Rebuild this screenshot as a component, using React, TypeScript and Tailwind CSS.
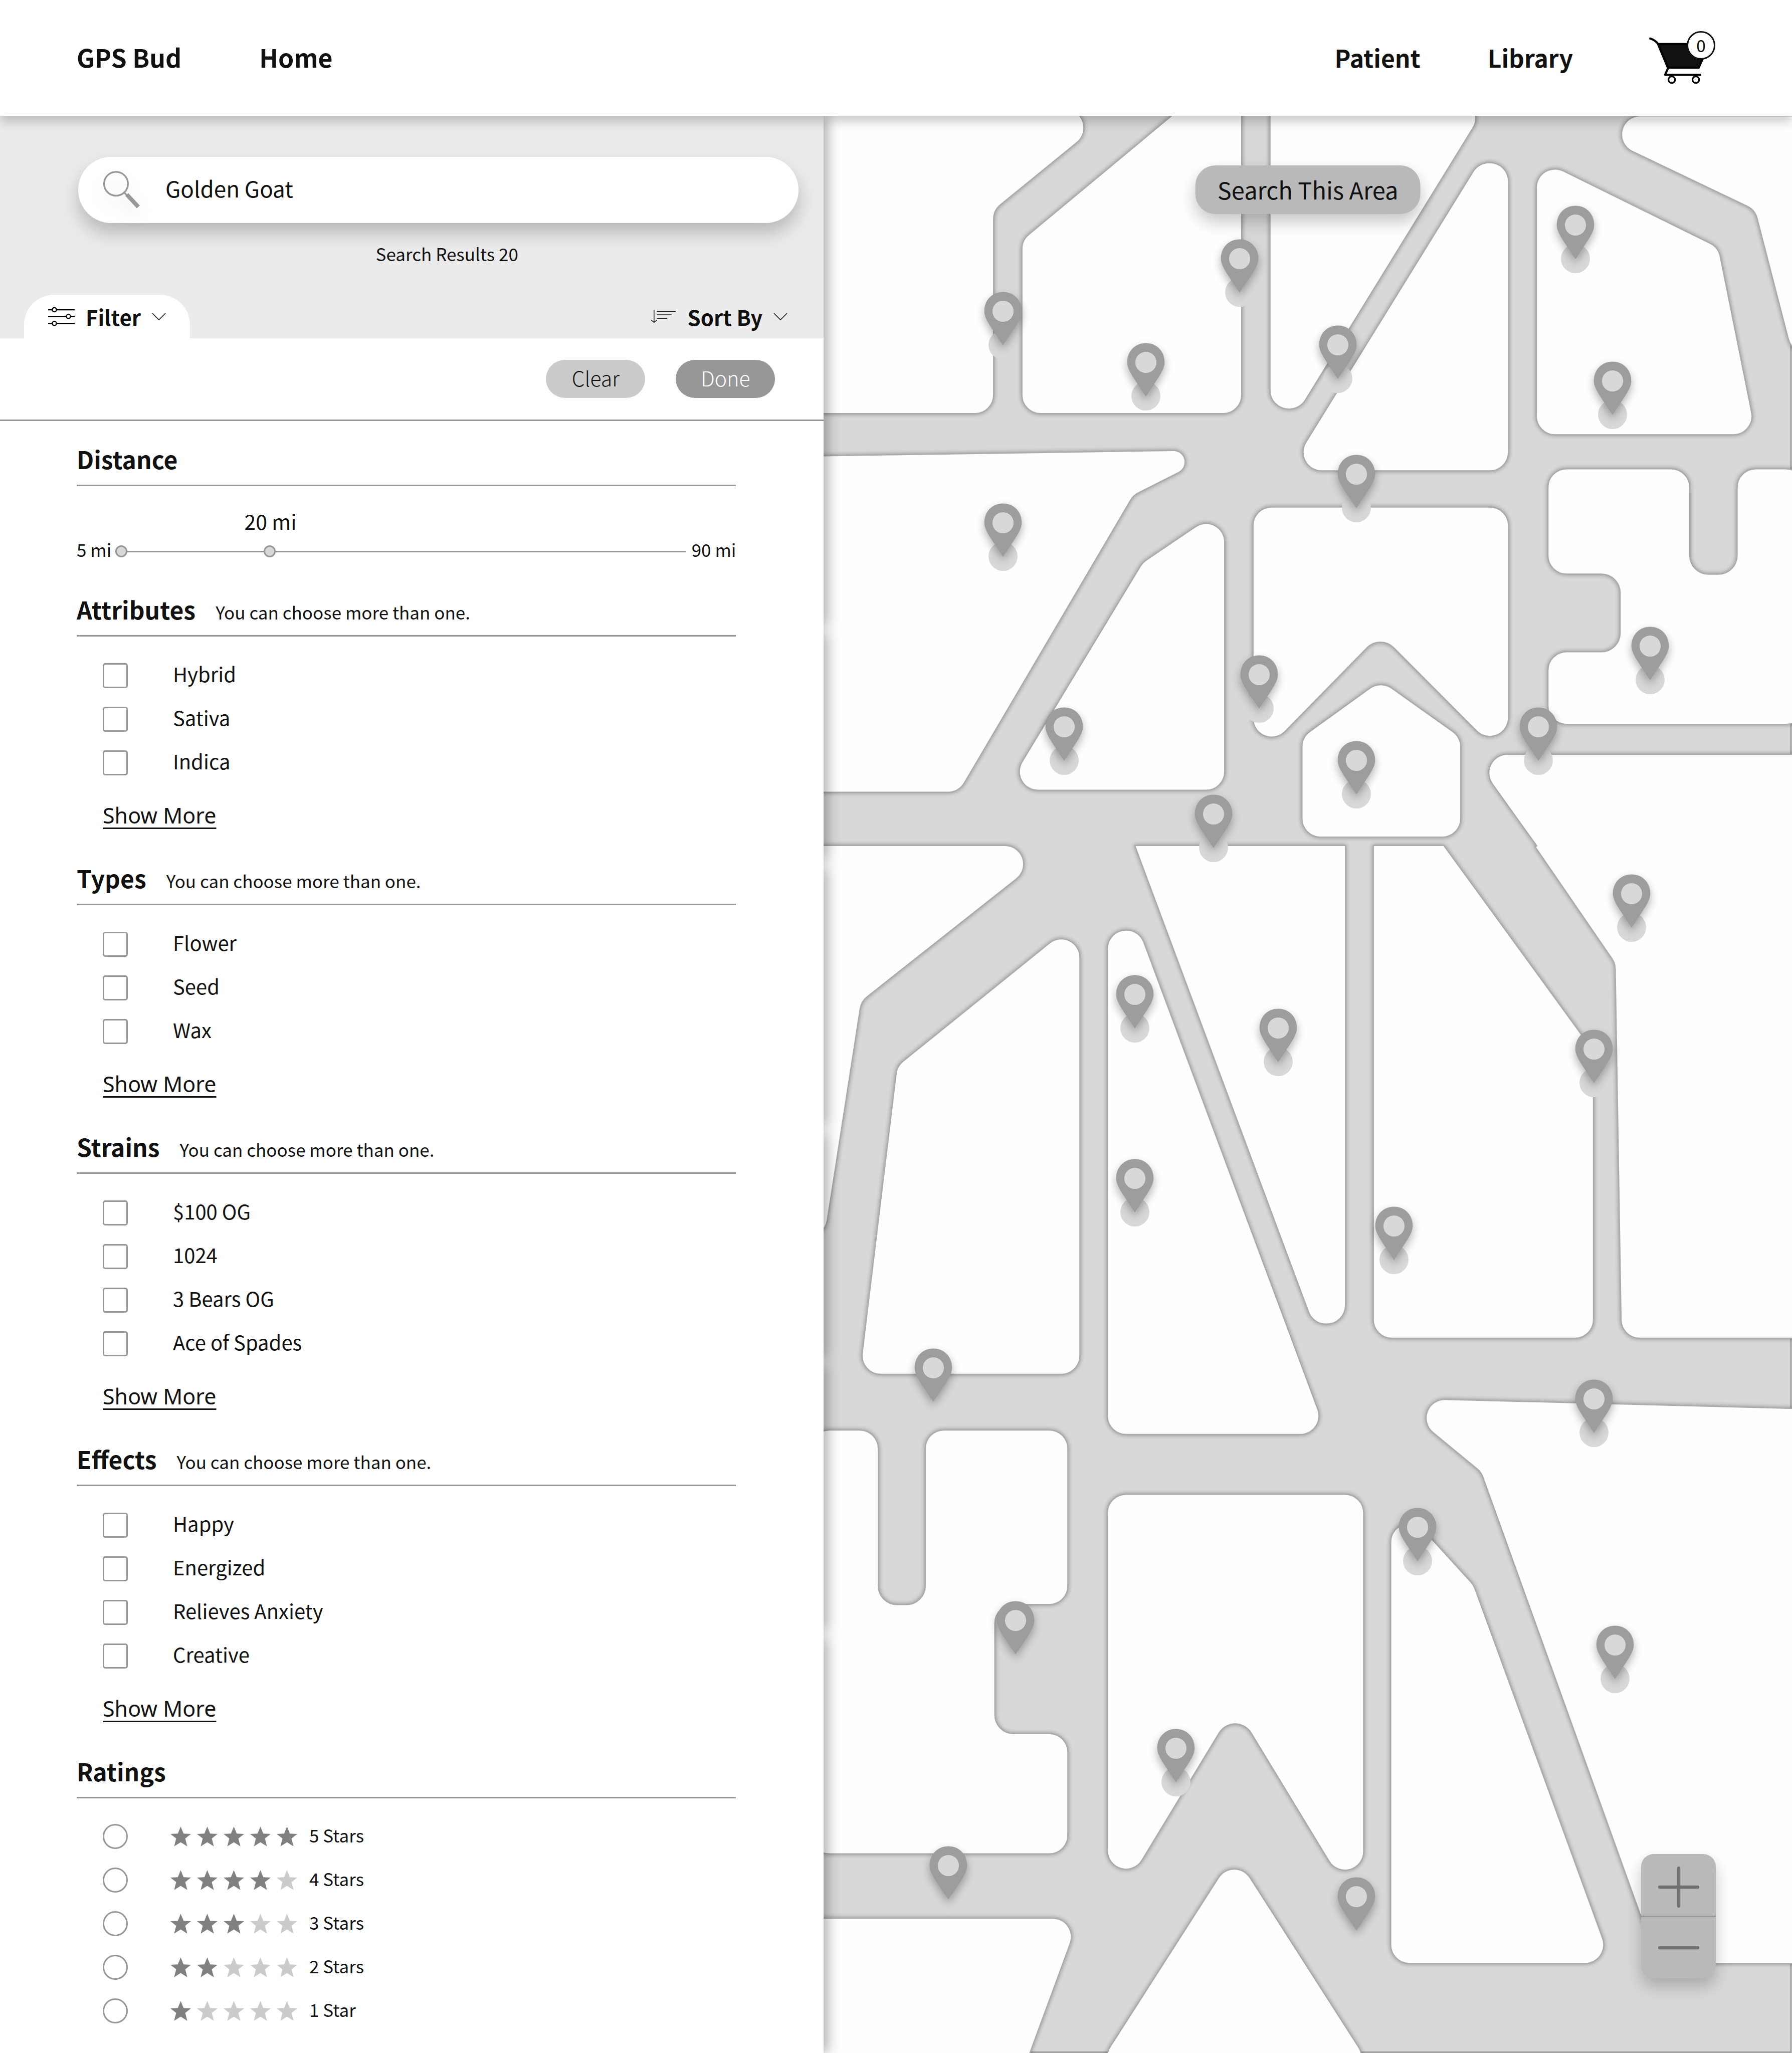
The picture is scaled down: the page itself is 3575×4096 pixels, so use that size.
import { useState } from "react";

type Point = [x: number, y: number, radius?: number];

const MAP = { x: 1986, y: 280, width: 2334, height: 4670 };
const CORNER = 45;

const BLOCKS: Point[][] = [
  [[1900, 264], [2695, 264], [2396, 508], [2396, 998], [1900, 998]],
  [[2921, 200], [2994, 200], [2994, 998], [2464, 998], [2464, 580]],
  [[3062, 240], [3594, 240], [3134, 987], [3062, 987]],
  [[3565, 393], [3637, 393], [3637, 1136], [3106, 1136]],
  [[3704, 381], [4143, 597], [4234, 1049], [3704, 1049]],
  [[3756, 280], [4400, 280], [4400, 1160], [4231, 507]],
  [[1900, 1101], [2951, 1085, 28], [2733, 1195], [2312, 1911], [1900, 1911]],
  [[2953, 1223], [2953, 1906], [2423, 1906], [2755, 1357]],
  [[3021, 1223], [3637, 1223], [3637, 1840], [3328, 1530], [3021, 1843]],
  [[3139, 1778], [3329, 1641], [3522, 1778], [3522, 2019], [3139, 2019]],
  [[3732, 1131], [4074, 1131], [4074, 1385], [4188, 1385], [4188, 1131], [4351, 1131], [4351, 1747], [3732, 1747], [3732, 1572], [3906, 1572], [3906, 1385], [3732, 1385]],
  [[1900, 2039], [2553, 2039], [2077, 2415], [1989, 2981], [1900, 2981]],
  [[2604, 2215], [2604, 3314], [2073, 3314], [2163, 2571]],
  [[2670, 2243], [2747, 2243], [3200, 3459], [2670, 3459]],
  [[2736, 2039, 0], [3244, 2039, 0], [3244, 3193], [3166, 3193]],
  [[3311, 2039, 0], [3481, 2039, 0], [3842, 2535], [3842, 3227], [3311, 3227]],
  [[3547, 1819], [4400, 1819], [4400, 3227], [3909, 3227], [3894, 2323], [3701, 2042, 0], [3705, 2040, 0]],
  [[1955, 3448], [2118, 3448], [2118, 3869], [2231, 3869], [2231, 3448], [2575, 3448], [2575, 3869], [2399, 3869], [2399, 4180], [2575, 4180], [2575, 4470], [1955, 4470]],
  [[1900, 4625], [2603, 4625], [2465, 5000], [1900, 5000]],
  [[2976, 4468], [3320, 5005], [2632, 5005]],
  [[2670, 3603], [3288, 3603], [3288, 4625], [2978, 4115], [2670, 4623]],
  [[3353, 3602], [3553, 3822], [3886, 4734], [3353, 4734]],
  [[3354, 3371], [4400, 3398], [4400, 4734], [3997, 4734], [3571, 3550]],
];

const PINS: [number, number][] = [
  [2418, 705], [2988, 579], [2763, 828], [2418, 1215], [3225, 786], [3798, 498], [3888, 873],
  [3270, 1098], [2565, 1707], [3036, 1581], [2925, 1917], [2736, 2352], [3978, 1512], [3708, 1707],
  [3270, 1788], [3933, 2109], [3081, 2433], [2736, 2796], [2250, 3252], [3843, 2484], [3360, 2910],
  [3843, 3327], [2448, 3861], [2835, 4170], [2286, 4452], [3417, 3636], [3894, 3921], [3270, 4527],
];

/** Closed polygon path whose corners are filleted with true circular arcs. */
function roundedPath(points: Point[]): string {
  const n = points.length;
  const parts = points.map(([x, y, r = CORNER], i) => {
    const [px, py] = points[(i + n - 1) % n];
    const [nx, ny] = points[(i + 1) % n];
    const a = Math.hypot(px - x, py - y);
    const b = Math.hypot(nx - x, ny - y);
    const ux = (px - x) / a, uy = (py - y) / a;
    const vx = (nx - x) / b, vy = (ny - y) / b;
    if (r === 0) return `L${x} ${y}`;
    const angle = Math.acos(ux * vx + uy * vy);
    const t = Math.min(r / Math.tan(angle / 2), a, b);
    const arc = t * Math.tan(angle / 2);
    const sweep = ux * vy - uy * vx < 0 ? 1 : 0;
    return `L${x + ux * t} ${y + uy * t}A${arc} ${arc} 0 0 ${sweep} ${x + vx * t} ${y + vy * t}`;
  });
  return "M" + parts.join("").slice(1) + "Z";
}

function CityMap() {
  return (
    <svg
      aria-hidden="true"
      className="absolute inset-0 h-full w-full"
      viewBox={`${MAP.x} ${MAP.y} ${MAP.width} ${MAP.height}`}
      preserveAspectRatio="xMinYMin slice"
    >
      <rect x="1900" y="200" width="2418" height="4748" fill="#d8d8d8" stroke="#a3a3a3" strokeWidth="4" />
      <g fill="#fefefe" stroke="#ababab" strokeWidth="3" className="[filter:drop-shadow(0_0_5px_rgba(0,0,0,0.35))]">
        {BLOCKS.map((b, i) => <path key={i} d={roundedPath(b)} />)}
      </g>
    </svg>
  );
}

function Pin({ x, y, index }: { x: number; y: number; index: number }) {
  return (
    <button
      type="button"
      aria-label={`Result ${index + 1}`}
      className="absolute w-[4.2864%] -translate-x-1/2"
      style={{ left: `${((x - MAP.x) / MAP.width) * 100}%`, top: `${((y - MAP.y) / MAP.height) * 100}%` }}
    >
      <svg viewBox="-50 0 100 164" className="block w-full overflow-visible">
        <circle cx="0" cy="127" r="35" fill="#d8d8d8" />
        <path
          d="M0 0C26 0 44.5 19 44.5 46C44.5 66 24 89 0 127C-24 89 -44.5 66 -44.5 46C-44.5 19 -26 0 0 0Z"
          fill="#9d9d9d"
          stroke="#979797"
          className="[filter:drop-shadow(0_10px_10px_rgba(0,0,0,0.3))]"
        />
        <circle cx="0" cy="46" r="26" fill="#d8d8d8" stroke="#979797" />
      </svg>
    </button>
  );
}

function Chevron() {
  return (
    <svg viewBox="0 0 32 18" className="h-4 w-7" fill="none" stroke="#222" strokeWidth="2">
      <path d="M1 1L16 16L31 1" />
    </svg>
  );
}

function CartIcon() {
  return (
    <svg viewBox="3974 76 162 130" className="h-[108px] w-[134px]" fill="none" stroke="#000" strokeWidth="5">
      <path d="M3998 107H4122L4096 164H4022Z" fill="#111" />
      <path d="M3977 93Q3991 97 3998 107L4022 165L4015 181H4102" strokeLinejoin="round" />
      <circle cx="4031" cy="193" r="8" strokeWidth="4" />
      <circle cx="4089" cy="193" r="8" strokeWidth="4" />
    </svg>
  );
}

function SearchIcon() {
  return (
    <svg viewBox="0 0 90 92" className="h-[76px] w-[74px] shrink-0 overflow-visible [filter:drop-shadow(0_16px_16px_rgba(0,0,0,0.12))]" fill="none" stroke="#979797">
      <circle cx="31" cy="31" r="29" strokeWidth="4" />
      <path d="M50 52L60 61" strokeWidth="4" />
      <path d="M57 57L85 87" strokeWidth="10" />
    </svg>
  );
}

function FilterIcon() {
  return (
    <svg viewBox="0 0 64 46" className="h-[38px] w-[53px]" fill="#fff" stroke="#000" strokeWidth="3">
      <path d="M0 6H64M0 22H64M0 39H64" />
      <circle cx="15" cy="6" r="5" />
      <circle cx="49" cy="22" r="5" />
      <circle cx="15" cy="39" r="5" />
    </svg>
  );
}

function SortIcon() {
  return (
    <svg viewBox="0 0 62 32" className="h-[26px] w-[51px]" fill="none" stroke="#222" strokeWidth="2">
      <path d="M8 0V30M1 24L8 30L15 24M15 3H61M15 11H51M15 20H40" />
    </svg>
  );
}

function Star({ on }: { on: boolean }) {
  return (
    <svg viewBox="0 0 50 48" className={on ? "h-10 w-[41px] fill-[#808080]" : "h-10 w-[41px] fill-[#cbcbcb]"}>
      <path d="M25 0L32 17L50 18L36 29L41 48L25 38L9 48L14 29L0 18L18 17Z" />
    </svg>
  );
}

function SectionHeader({ title, note }: { title: string; note?: boolean }) {
  return (
    <div className="flex items-baseline gap-10 border-b-[3px] border-[#979797] pb-[22px]">
      <h2 className="text-[48px] leading-[60px] font-bold">{title}</h2>
      {note && <p className="text-[35px] leading-[40px]">You can choose more than one.</p>}
    </div>
  );
}

function CheckSection({ title, options }: { title: string; options: string[] }) {
  return (
    <section className="pb-16">
      <SectionHeader title={title} note />
      <ul className="mt-[34px] pl-[52px]">
        {options.map((o) => (
          <li key={o}>
            <label className="flex h-[87px] items-center gap-[90px]">
              <input type="checkbox" className="size-[50px] shrink-0 appearance-none rounded-[5px] border-[3px] border-[#979797] checked:bg-[#979797]" />
              <span className="pb-2 text-[40px] leading-[60px]">{o}</span>
            </label>
          </li>
        ))}
      </ul>
      <a href="#more" className="mt-8 ml-[52px] block w-fit font-['Noto_Sans',sans-serif] text-[43px] leading-[60px] underline decoration-[3px] underline-offset-8">
        Show More
      </a>
    </section>
  );
}

function DistanceSlider() {
  const [position, setPosition] = useState(266);
  const share = position / 1000;
  return (
    <div className="flex h-[60px] items-center gap-2 text-[35px]">
      <span className="pb-2">5 mi</span>
      <div className="relative flex flex-1 items-center pr-1">
        <output
          htmlFor="distance"
          className="absolute bottom-12 -translate-x-1/2 text-[41px] leading-[50px] whitespace-nowrap"
          style={{ left: `calc(12px + (100% - 24px) * ${share})` }}
        >
          20 mi
        </output>
        <input
          id="distance"
          type="range"
          min={0}
          max={1000}
          value={position}
          onChange={(e) => setPosition(Number(e.target.value))}
          aria-label="Distance"
          aria-valuetext="20 mi"
          className="h-6 w-full appearance-none bg-transparent [&::-webkit-slider-runnable-track]:h-[3px] [&::-webkit-slider-runnable-track]:bg-[#979797] [&::-webkit-slider-thumb]:-mt-[11px] [&::-webkit-slider-thumb]:size-6 [&::-webkit-slider-thumb]:appearance-none [&::-webkit-slider-thumb]:rounded-full [&::-webkit-slider-thumb]:border-[3px] [&::-webkit-slider-thumb]:border-[#979797] [&::-webkit-slider-thumb]:bg-[#d8d8d8]"
        />
        <span className="pointer-events-none absolute left-0 size-6 rounded-full border-[3px] border-[#979797] bg-[#d8d8d8]" />
      </div>
      <span className="pb-2">90 mi</span>
    </div>
  );
}

function PanelShadows() {
  return (
    <div aria-hidden="true" className="absolute inset-0 -z-10 flex flex-col gap-3 *:shadow-[8px_0_24px_rgba(0,0,0,0.32)]">
      <div className="flex-[1003]" />
      <div className="flex-[449]" />
      <div className="flex-[509]" />
      <div className="flex-[445]" />
      <div className="flex-[522]" />
      <div className="flex-[816]" />
    </div>
  );
}

export default function App() {
  return (
    <div className="flex min-h-screen w-full flex-col bg-white font-['Noto_Sans_CJK_SC',sans-serif] text-[#111]">
      <header className="relative z-20 flex h-[231px] items-center justify-between bg-white pr-[153px] pl-[153px] shadow-[0_12px_20px_rgba(0,0,0,0.2)]">
        <nav className="flex gap-[155px] pb-1 text-[50px] font-bold">
          <a href="#brand">GPS Bud</a>
          <a href="#home">Home</a>
        </nav>
        <div className="flex items-center gap-[150px]">
          <nav className="flex gap-[134px] pb-1 text-[48px] font-bold">
            <a href="#patient">Patient</a>
            <a href="#library">Library</a>
          </nav>
          <button type="button" aria-label="Cart, 0 items" className="relative">
            <CartIcon />
            <span className="absolute top-0 right-0 flex size-[57px] items-center justify-center rounded-full border-[3px] border-[#111] bg-white text-[34px] leading-none">
              0
            </span>
          </button>
        </div>
      </header>

      <div className="flex flex-1">
        <aside className="relative isolate z-10 flex w-[45.97%] shrink-0 flex-col">
          <PanelShadows />
          <div className="flex-1 bg-white">
            <div className="bg-[#ebebeb]">
              <form role="search" className="pt-[82px] pr-[50px] pl-[156px]">
                <label className="flex h-[132px] items-center gap-[50px] rounded-full bg-white pl-[50px] shadow-[0_20px_36px_rgba(0,0,0,0.22)]">
                  <SearchIcon />
                  <input type="text" aria-label="Search" defaultValue="Golden Goat" className="min-w-0 flex-1 bg-transparent pb-2 text-[44px] outline-none" />
                </label>
                <p className="pt-9 pl-[34px] text-center text-[35px] leading-[50px]">Search Results 20</p>
              </form>
              <div className="flex items-end justify-between pt-[57px] pr-[72px] pl-12">
                <button type="button" className="flex h-[87px] items-center gap-[22px] rounded-t-[60px] bg-white px-12 text-[42px] font-bold">
                  <FilterIcon />
                  Filter
                  <Chevron />
                </button>
                <button type="button" className="flex h-[87px] items-center gap-[22px] text-[42px] font-bold">
                  <SortIcon />
                  Sort By
                  <Chevron />
                </button>
              </div>
            </div>

            <div className="flex justify-end gap-[61px] border-b-[3px] border-[#979797] pt-[43px] pr-[97px] pb-[43px] text-[41px] font-light">
              <button type="button" className="flex h-[76px] w-[198px] items-center justify-center rounded-full bg-[#cbcbcb] pb-1">Clear</button>
              <button type="button" className="flex h-[76px] w-[198px] items-center justify-center rounded-full bg-[#979797] pb-1 text-white">Done</button>
            </div>

            <div className="pr-[175px] pl-[153px]">
              <section className="pt-[45px] pb-[55px]">
                <SectionHeader title="Distance" />
                <div className="pt-[100px]">
                  <DistanceSlider />
                </div>
              </section>
              <CheckSection title="Attributes" options={["Hybrid", "Sativa", "Indica"]} />
              <CheckSection title="Types" options={["Flower", "Seed", "Wax"]} />
              <CheckSection title="Strains" options={["$100 OG", "1024", "3 Bears OG", "Ace of Spades"]} />
              <CheckSection title="Effects" options={["Happy", "Energized", "Relieves Anxiety", "Creative"]} />
              <section>
                <SectionHeader title="Ratings" />
                <ul className="mt-8 pl-[52px]">
                  {[5, 4, 3, 2, 1].map((n) => (
                    <li key={n}>
                      <label className="flex h-[87px] items-center">
                        <input type="radio" name="rating" className="size-[50px] shrink-0 appearance-none rounded-full border-[3px] border-[#979797] checked:bg-[#979797]" />
                        <span className="flex gap-3 pl-[85px]">
                          {[1, 2, 3, 4, 5].map((s) => <Star key={s} on={s <= n} />)}
                        </span>
                        <span className="pb-1 pl-6 text-[35px]">{n === 1 ? "1 Star" : `${n} Stars`}</span>
                      </label>
                    </li>
                  ))}
                </ul>
              </section>
            </div>
          </div>
        </aside>

        <main className="relative flex-1 overflow-hidden">
          <CityMap />
          {PINS.map(([x, y], i) => <Pin key={i} x={x} y={y} index={i} />)}
          <button type="button" className="absolute top-[99px] left-1/2 flex h-[97px] -translate-x-1/2 items-center rounded-[40px] bg-[#b9b9b9] px-11 text-[47px] whitespace-nowrap shadow-[0_16px_32px_rgba(0,0,0,0.22)]">
            Search This Area
          </button>
          <div className="absolute right-[152px] bottom-[149px] flex w-[149px] flex-col rounded-[25px] bg-[#b9b9b9] shadow-[0_16px_32px_rgba(0,0,0,0.22)]">
            <button type="button" aria-label="Zoom in" className="flex h-[126px] items-center justify-center border-b-[3px] border-[#979797] pt-2">
              <svg viewBox="0 0 100 100" className="size-[82px]" stroke="#707070" strokeWidth="8" strokeLinecap="round">
                <path d="M4 50H96M50 4V96" />
              </svg>
            </button>
            <button type="button" aria-label="Zoom out" className="flex h-[122px] items-center justify-center">
              <svg viewBox="0 0 100 100" className="size-[82px]" stroke="#707070" strokeWidth="8" strokeLinecap="round">
                <path d="M4 50H96" />
              </svg>
            </button>
          </div>
        </main>
      </div>
    </div>
  );
}
